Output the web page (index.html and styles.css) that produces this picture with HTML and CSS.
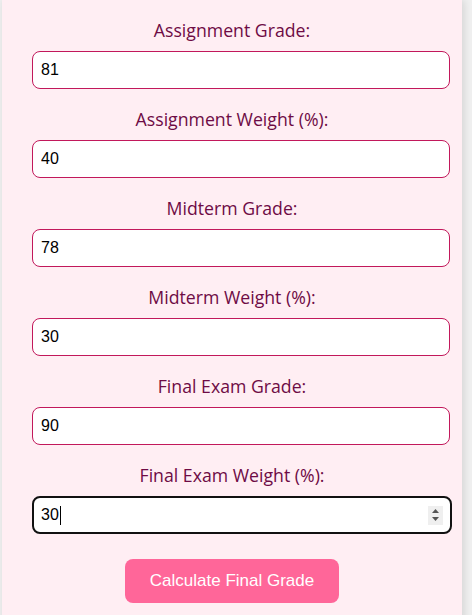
FILE: index.html
```html
<!DOCTYPE html>
<html lang="en">
<head>
  <meta charset="UTF-8" />
  <meta name="viewport" content="width=device-width, initial-scale=1.0" />
  <title>Final Grade Calculator</title>
  <link rel="stylesheet" href="styles.css">
</head>
<body>
  <div class="container">
    <form class="grade-form" onsubmit="return false;">
      <label for="assignment-grade">Assignment Grade:</label>
      <input type="number" id="assignment-grade" value="81">

      <label for="assignment-weight">Assignment Weight (%):</label>
      <input type="number" id="assignment-weight" value="40">

      <label for="midterm-grade">Midterm Grade:</label>
      <input type="number" id="midterm-grade" value="78">

      <label for="midterm-weight">Midterm Weight (%):</label>
      <input type="number" id="midterm-weight" value="30">

      <label for="final-grade">Final Exam Grade:</label>
      <input type="number" id="final-grade" value="90">

      <label for="final-weight">Final Exam Weight (%):</label>
      <div class="field-focus">
        <span class="value">30</span><span class="caret"></span>
        <span class="spinner">
          <svg width="9" height="14" viewBox="0 0 9 14"><path d="M4.5 1 L8 5 L1 5 Z M1 9 L8 9 L4.5 13 Z" fill="#555"/></svg>
        </span>
      </div>

      <button type="button" id="calc-button">Calculate Final Grade</button>
    </form>
  </div>
</body>
</html>
```

FILE: styles.css
```css
html, body {
  margin: 0;
  height: 100%;
  background: #f0f0f0;
}
.container {
  width: 460px;
  margin-left: 2px;
  min-height: 100%;
  background: #ffeef3;
  box-shadow: 2px 0 8px rgba(0, 0, 0, 0.12);
  box-sizing: border-box;
  padding: 18px 30px 20px 30px;
}
.grade-form {
  display: flex;
  flex-direction: column;
  align-items: center;
}
label {
  font-family: "Open Sans", "Noto Sans", sans-serif;
  font-size: 17.7px;
  line-height: 24px;
  color: #6e0b45;
  margin-bottom: 9px;
}
input, .field-focus {
  align-self: flex-start;
  width: 100%;
  height: 38px;
  box-sizing: content-box;
  height: 36px;
  margin-bottom: 18px;
  padding: 0 8px;
  border: 1px solid #c2185b;
  border-radius: 8px;
  background: #fff;
  font-family: "Liberation Sans", Arial, sans-serif;
  font-size: 16px;
  color: #000;
}
input::-webkit-inner-spin-button {
  -webkit-appearance: none;
}
.field-focus {
  display: flex;
  align-items: center;
  border: 2px solid #111;
  height: 34px;
  padding: 0 7px 0 7px;
  width: calc(100% + 2px);
  margin-bottom: 25px;
}
.caret {
  width: 1px;
  height: 19px;
  background: #000;
  margin-left: 1px;
}
.spinner {
  margin-left: auto;
  width: 15px;
  height: 19px;
  background: #efefef;
  display: flex;
  align-items: center;
  justify-content: center;
}
.spinner svg {
  display: block;
}
#calc-button {
  font-family: "Liberation Sans", Arial, sans-serif;
  font-size: 17px;
  color: #fff;
  background: #ff6699;
  border: none;
  border-radius: 8px;
  width: 214px;
  height: 44px;
  cursor: pointer;
}
```
